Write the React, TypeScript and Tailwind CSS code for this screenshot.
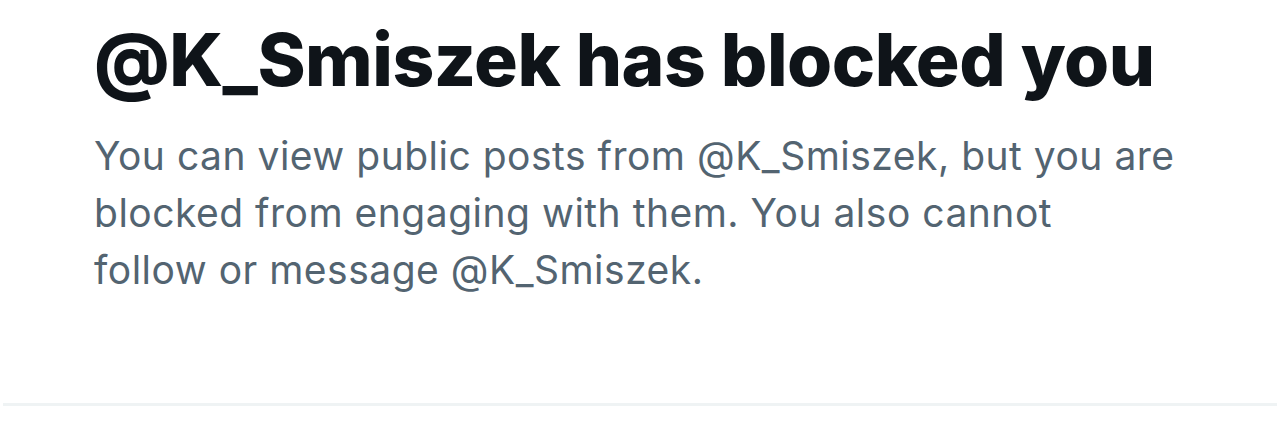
export default function App() {
  return (
    <div
      className="w-[1280px] h-[427px] bg-white flex flex-col overflow-hidden"
      style={{ fontFamily: 'Inter, "Noto Sans", sans-serif' }}
    >
      <div className="flex-1 pl-[94px] pr-[60px] pt-[18px]">
        <h1 className="text-[73px] leading-[84px] font-extrabold tracking-[-0.5px] text-[#0f1419]">
          @K_Smiszek has blocked you
        </h1>
        <p className="mt-[25px] text-[39px] leading-[57px] tracking-[0.5px] text-[#536471]">
          You can view public posts from @K_Smiszek, but you are
          <br />
          blocked from engaging with them. You also cannot
          <br />
          follow or message @K_Smiszek.
        </p>
      </div>
      <div className="mx-[3px] h-[3px] bg-[#eff3f4] mb-[21px]" />
    </div>
  )
}
